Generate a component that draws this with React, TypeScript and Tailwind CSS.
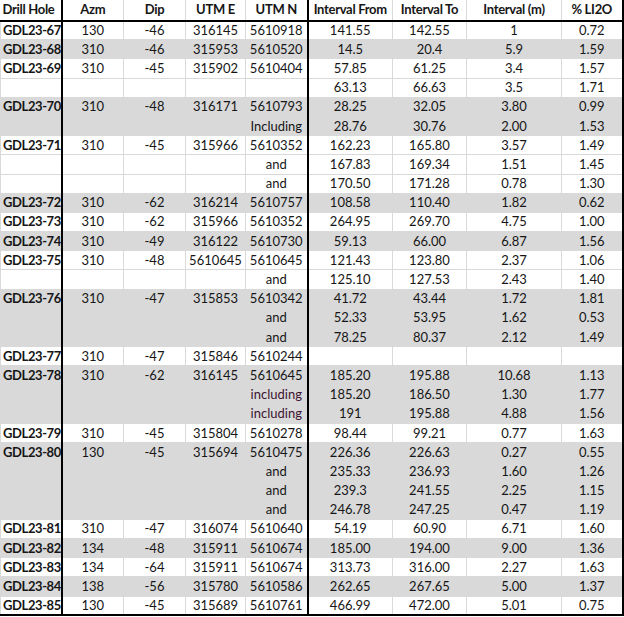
import React from "react";

type Sub = { label?: string; from: string; to: string; m: string; li: string };
type Hole = { id: string; azm: string; dip: string; e: string; n: string; rows: Sub[]; labelTone?: string };

const holes: Hole[] = [
  { id: "GDL23-67", azm: "130", dip: "-46", e: "316145", n: "5610918", rows: [{ from: "141.55", to: "142.55", m: "1", li: "0.72" }] },
  { id: "GDL23-68", azm: "310", dip: "-46", e: "315953", n: "5610520", rows: [{ from: "14.5", to: "20.4", m: "5.9", li: "1.59" }] },
  {
    id: "GDL23-69", azm: "310", dip: "-45", e: "315902", n: "5610404",
    rows: [
      { from: "57.85", to: "61.25", m: "3.4", li: "1.57" },
      { label: "", from: "63.13", to: "66.63", m: "3.5", li: "1.71" },
    ],
  },
  {
    id: "GDL23-70", azm: "310", dip: "-48", e: "316171", n: "5610793",
    rows: [
      { from: "28.25", to: "32.05", m: "3.80", li: "0.99" },
      { label: "Including", from: "28.76", to: "30.76", m: "2.00", li: "1.53" },
    ],
  },
  {
    id: "GDL23-71", azm: "310", dip: "-45", e: "315966", n: "5610352",
    rows: [
      { from: "162.23", to: "165.80", m: "3.57", li: "1.49" },
      { label: "and", from: "167.83", to: "169.34", m: "1.51", li: "1.45" },
      { label: "and", from: "170.50", to: "171.28", m: "0.78", li: "1.30" },
    ],
  },
  { id: "GDL23-72", azm: "310", dip: "-62", e: "316214", n: "5610757", rows: [{ from: "108.58", to: "110.40", m: "1.82", li: "0.62" }] },
  { id: "GDL23-73", azm: "310", dip: "-62", e: "315966", n: "5610352", rows: [{ from: "264.95", to: "269.70", m: "4.75", li: "1.00" }] },
  { id: "GDL23-74", azm: "310", dip: "-49", e: "316122", n: "5610730", rows: [{ from: "59.13", to: "66.00", m: "6.87", li: "1.56" }] },
  {
    id: "GDL23-75", azm: "310", dip: "-48", e: "5610645", n: "5610645",
    rows: [
      { from: "121.43", to: "123.80", m: "2.37", li: "1.06" },
      { label: "and", from: "125.10", to: "127.53", m: "2.43", li: "1.40" },
    ],
  },
  {
    id: "GDL23-76", azm: "310", dip: "-47", e: "315853", n: "5610342",
    rows: [
      { from: "41.72", to: "43.44", m: "1.72", li: "1.81" },
      { label: "and", from: "52.33", to: "53.95", m: "1.62", li: "0.53" },
      { label: "and", from: "78.25", to: "80.37", m: "2.12", li: "1.49" },
    ],
  },
  { id: "GDL23-77", azm: "310", dip: "-47", e: "315846", n: "5610244", rows: [{ from: "", to: "", m: "", li: "" }] },
  {
    id: "GDL23-78", azm: "310", dip: "-62", e: "316145", n: "5610645", labelTone: "text-[#3d1330]",
    rows: [
      { from: "185.20", to: "195.88", m: "10.68", li: "1.13" },
      { label: "including", from: "185.20", to: "186.50", m: "1.30", li: "1.77" },
      { label: "including", from: "191", to: "195.88", m: "4.88", li: "1.56" },
    ],
  },
  { id: "GDL23-79", azm: "310", dip: "-45", e: "315804", n: "5610278", rows: [{ from: "98.44", to: "99.21", m: "0.77", li: "1.63" }] },
  {
    id: "GDL23-80", azm: "130", dip: "-45", e: "315694", n: "5610475",
    rows: [
      { from: "226.36", to: "226.63", m: "0.27", li: "0.55" },
      { label: "and", from: "235.33", to: "236.93", m: "1.60", li: "1.26" },
      { label: "and", from: "239.3", to: "241.55", m: "2.25", li: "1.15" },
      { label: "and", from: "246.78", to: "247.25", m: "0.47", li: "1.19" },
    ],
  },
  { id: "GDL23-81", azm: "310", dip: "-47", e: "316074", n: "5610640", rows: [{ from: "54.19", to: "60.90", m: "6.71", li: "1.60" }] },
  { id: "GDL23-82", azm: "134", dip: "-48", e: "315911", n: "5610674", rows: [{ from: "185.00", to: "194.00", m: "9.00", li: "1.36" }] },
  { id: "GDL23-83", azm: "134", dip: "-64", e: "315911", n: "5610674", rows: [{ from: "313.73", to: "316.00", m: "2.27", li: "1.63" }] },
  { id: "GDL23-84", azm: "138", dip: "-56", e: "315780", n: "5610586", rows: [{ from: "262.65", to: "267.65", m: "5.00", li: "1.37" }] },
  { id: "GDL23-85", azm: "130", dip: "-45", e: "315689", n: "5610761", rows: [{ from: "466.99", to: "472.00", m: "5.01", li: "0.75" }] },
];

const cell = "border border-[#d9d9d9] text-center p-0 leading-none whitespace-nowrap overflow-hidden";
const head = "border-b-2 border-b-black p-0 font-bold whitespace-nowrap overflow-hidden tracking-[-0.3px]";

export default function App() {
  const total = holes.length;
  return (
    <div className="w-[624px] h-[617px] bg-white text-[#161616] text-[13px] font-['Lato','Open_Sans',sans-serif]">
      <table className="table-fixed border-collapse w-[622px]">
        <colgroup>
          <col className="w-[61px]" />
          <col className="w-[62px]" />
          <col className="w-[62px]" />
          <col className="w-[60px]" />
          <col className="w-[62px]" />
          <col className="w-[85px]" />
          <col className="w-[74px]" />
          <col className="w-[95px]" />
          <col className="w-[61px]" />
        </colgroup>
        <thead>
          <tr className="h-[20px]">
            <th className={`${head} border-r-2 border-r-black text-left pl-[2px]`}>Drill Hole</th>
            <th className={`${head} border-r border-r-[#d9d9d9]`}>Azm</th>
            <th className={`${head} border-r border-r-[#d9d9d9]`}>Dip</th>
            <th className={`${head} border-r border-r-[#d9d9d9]`}>UTM E</th>
            <th className={`${head} border-r-2 border-r-black`}>UTM N</th>
            <th className={`${head} border-r border-r-[#d9d9d9]`}>Interval From</th>
            <th className={`${head} border-r border-r-[#d9d9d9]`}>Interval To</th>
            <th className={`${head} border-r border-r-[#d9d9d9]`}>Interval (m)</th>
            <th className={`${head} border-r-2 border-r-black`}>% LI2O</th>
          </tr>
        </thead>
        <tbody>
          {holes.map((h, gi) => {
            const gray = gi % 2 === 1;
            const bg = gray ? "bg-[#d9d9d9]" : "bg-white";
            const last = gi === total - 1;
            return h.rows.map((r, ri) => {
              const bottom = last && ri === h.rows.length - 1 ? "border-b-2 border-b-black" : "";
              return (
                <tr key={h.id + ri} className={`h-[19.2px] ${bg}`}>
                  <td className={`${cell} text-left pl-[2px] font-bold tracking-[-0.4px] border-r-2 border-r-black ${bottom}`}>
                    {ri === 0 ? h.id : ""}
                  </td>
                  <td className={`${cell} ${bottom}`}>{ri === 0 ? h.azm : ""}</td>
                  <td className={`${cell} ${bottom}`}>{ri === 0 ? h.dip : ""}</td>
                  <td className={`${cell} ${bottom}`}>{ri === 0 ? h.e : ""}</td>
                  <td className={`${cell} border-r-2 border-r-black ${bottom} ${ri > 0 && h.labelTone ? h.labelTone : ""}`}>
                    {ri === 0 ? h.n : r.label}
                  </td>
                  <td className={`${cell} ${bottom}`}>{r.from}</td>
                  <td className={`${cell} ${bottom}`}>{r.to}</td>
                  <td className={`${cell} ${bottom}`}>{r.m}</td>
                  <td className={`${cell} border-r-2 border-r-black ${bottom}`}>{r.li}</td>
                </tr>
              );
            });
          })}
        </tbody>
      </table>
    </div>
  );
}
